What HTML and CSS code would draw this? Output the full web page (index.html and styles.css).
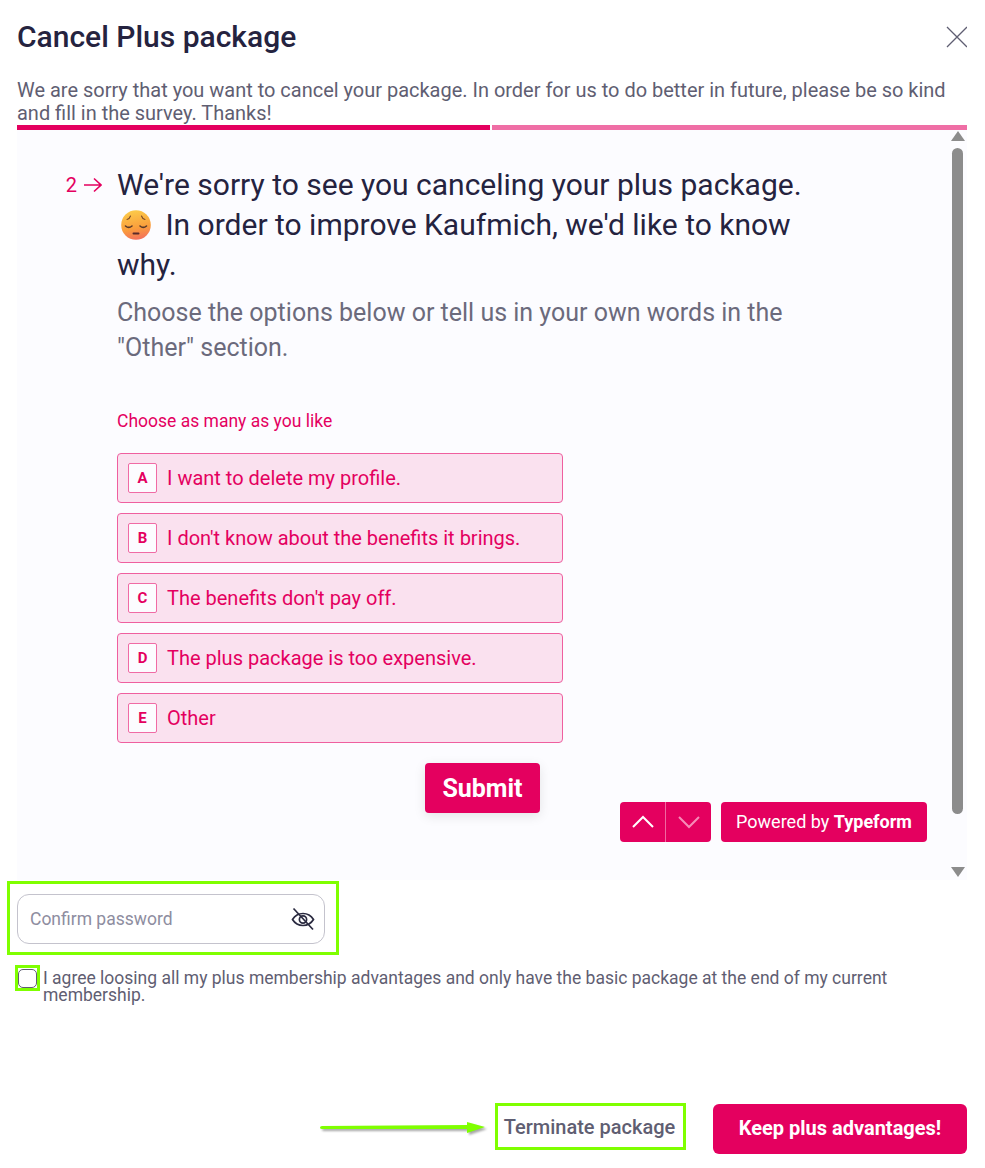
FILE: index.html
```html
<!DOCTYPE html>
<html lang="en">
<head>
    <meta charset="UTF-8">
    <title>Cancel Plus package</title>
    <link rel="stylesheet" href="styles.css">
</head>
<body>
    <div class="dialog">
        <div class="dialog-head">
            <h1 class="dialog-title">Cancel Plus package</h1>
            <svg class="close-icon" viewBox="0 0 22 22" fill="none" stroke="#5f5e72" stroke-width="1.3">
                <path d="M2 1l20 20M22 1L2 21"/>
            </svg>
        </div>
        <p class="dialog-text">We are sorry that you want to cancel your package. In order for us to do better in future, please be so kind and fill in the survey. Thanks!</p>

        <div class="progress">
            <div class="progress-done"></div>
            <div class="progress-rest"></div>
        </div>

        <div class="survey">
            <div class="survey-body">
                <div class="question">
                    <div class="question-num">2
                        <svg class="num-arrow" viewBox="0 0 18 16" fill="none" stroke="#e4005f" stroke-width="1.6">
                            <path d="M0 8h17M10 1.500L17 8l-7 6.500"/>
                        </svg>
                    </div>
                    <div class="question-main">
                        <h2 class="question-title">We're sorry to see you canceling your plus package.
                            <svg class="emoji" viewBox="0 0 30 30">
                                <defs>
                                    <linearGradient id="face" x1="0.4" y1="0" x2="0.6" y2="1">
                                        <stop offset="0" stop-color="#fccb4a"/>
                                        <stop offset="0.6" stop-color="#fa9e3c"/>
                                        <stop offset="1" stop-color="#f36f5e"/>
                                    </linearGradient>
                                </defs>
                                <circle cx="15" cy="15" r="14.800" fill="url(#face)"/>
                                <path d="M4.500 16q3.200 2.800 6.500 0M19 16q3.200 2.800 6.500 0" fill="none" stroke="#5a3a2a" stroke-width="1.600" stroke-linecap="round"/>
                                <path d="M6 9.500q2.500-.5 3.500-3.500M24 9.500q-2.500-.5-3.500-3.500" fill="none" stroke="#7a4a2a" stroke-width="1.100" stroke-linecap="round"/>
                                <path d="M12.500 23.500h5" stroke="#5a2a2a" stroke-width="2" stroke-linecap="round"/>
                            </svg>
                            In order to improve Kaufmich, we'd like to know why.</h2>
                        <p class="question-sub">Choose the options below or tell us in your own words in the "Other" section.</p>
                        <div class="choose-hint">Choose as many as you like</div>
                        <div class="options">
                            <div class="option"><span class="option-key">A</span>I want to delete my profile.</div>
                            <div class="option"><span class="option-key">B</span>I don't know about the benefits it brings.</div>
                            <div class="option"><span class="option-key">C</span>The benefits don't pay off.</div>
                            <div class="option"><span class="option-key">D</span>The plus package is too expensive.</div>
                            <div class="option"><span class="option-key">E</span>Other</div>
                        </div>
                        <div class="submit-row">
                            <button class="submit-btn">Submit</button>
                        </div>
                    </div>
                </div>
                <div class="survey-nav">
                    <div class="nav-arrows">
                        <span class="nav-arrow">
                            <svg viewBox="0 0 24 14" fill="none" stroke="#fff" stroke-width="2"><path d="M2 12L12 2l10 10"/></svg>
                        </span>
                        <span class="nav-arrow nav-arrow-off">
                            <svg viewBox="0 0 24 14" fill="none" stroke="#f68cb8" stroke-width="2"><path d="M2 2l10 10L22 2"/></svg>
                        </span>
                    </div>
                    <div class="powered">Powered by <b>Typeform</b></div>
                </div>
            </div>
            <div class="scrollbar">
                <span class="scroll-up"></span>
                <span class="scroll-thumb"></span>
                <span class="scroll-down"></span>
            </div>
        </div>

        <div class="password-mark">
            <div class="password-field">
                <span class="password-hint">Confirm password</span>
                <svg class="eye-icon" viewBox="0 0 24 24" fill="none" stroke="#2a2a40" stroke-width="1.700">
                    <path d="M1.500 12.500C4 8.500 7.500 6.500 12 6.500s8 2 10.500 6c-2.500 4-6 6-10.500 6s-8-2-10.500-6z"/>
                    <circle cx="12" cy="12.500" r="3.600"/>
                    <path d="M2.500 1.500l19.500 21"/>
                </svg>
            </div>
        </div>

        <div class="agree">
            <span class="check-mark"><span class="check-box"></span></span>
            <span class="agree-text">I agree loosing all my plus membership advantages and only have the basic package at the end of my current membership.</span>
        </div>

        <div class="dialog-foot">
            <svg class="green-arrow" viewBox="0 0 165 14">
                <path d="M0 7.500Q0 6 2 6L147 5V2l18 5-18 6V9L2 9Q0 9 0 7.500z" fill="#7fff00"/>
            </svg>
            <button class="terminate-btn">Terminate package</button>
            <button class="keep-btn">Keep plus advantages!</button>
        </div>
    </div>
</body>
</html>
```

FILE: styles.css
```css
* {
    margin: 0;
    padding: 0;
    box-sizing: border-box;
}

body {
    background: #fff;
    font-family: Roboto, "Liberation Sans", sans-serif;
    color: #5f5e72;
}

.dialog {
    width: 985px;
    height: 1168px;
    padding: 0 18px 0 17px;
    display: flex;
    flex-direction: column;
}

.dialog-head {
    height: 79px;
    display: flex;
    align-items: flex-start;
    justify-content: space-between;
}

.dialog-title {
    margin-top: 20px;
    font-size: 30px;
    line-height: 34px;
    font-weight: 500;
    color: #25233f;
}

.close-icon {
    width: 22px;
    height: 22px;
    margin-top: 26px;
}

.dialog-text {
    font-size: 19.98px;
    line-height: 23px;
    height: 46px;
}

.progress {
    display: flex;
    gap: 2px;
    height: 5px;
}

.progress-done {
    width: 473px;
    background: #e4005f;
}

.progress-rest {
    flex: 1;
    background: #ef6ea5;
}

.survey {
    height: 750px;
    background: #fcfcff;
    display: flex;
}

.survey-body {
    flex: 1;
    position: relative;
}

.question {
    display: flex;
    padding-top: 35px;
}

.question-num {
    width: 100px;
    display: flex;
    justify-content: flex-end;
    align-items: center;
    gap: 7px;
    height: 40px;
    padding-right: 15px;
    font-size: 20px;
    color: #e4005f;
}

.num-arrow {
    width: 18px;
    height: 16px;
}

.question-main {
    width: 700px;
}

.question-title {
    font-size: 30px;
    line-height: 40px;
    font-weight: 400;
    color: #25233f;
}

.emoji {
    width: 30px;
    height: 30px;
    vertical-align: -5px;
    margin: 0 7px 0 4px;
}

.question-sub {
    margin-top: 10px;
    font-size: 25px;
    line-height: 35px;
    color: #6b6a7c;
}

.choose-hint {
    margin-top: 44px;
    font-size: 17.5px;
    line-height: 24px;
    color: #e4005f;
}

.options {
    margin-top: 20px;
    width: 446px;
    display: flex;
    flex-direction: column;
    gap: 10px;
}

.option {
    height: 50px;
    display: flex;
    align-items: center;
    gap: 10px;
    padding-left: 10px;
    background: #fae1ef;
    border: 1px solid #ef5f9f;
    border-radius: 4px;
    font-size: 20px;
    color: #e4005f;
}

.option-key {
    width: 29px;
    height: 30px;
    display: flex;
    align-items: center;
    justify-content: center;
    background: #fcfcff;
    border: 1px solid #f06ba5;
    border-radius: 2px;
    font-size: 15px;
    font-weight: 700;
}

.submit-row {
    margin-top: 20px;
    width: 423px;
    display: flex;
    justify-content: flex-end;
}

.submit-btn {
    width: 115px;
    height: 50px;
    background: #e4005f;
    border: none;
    border-radius: 4px;
    color: #fff;
    font-family: inherit;
    font-size: 25px;
    font-weight: 700;
    box-shadow: 0 3px 12px rgba(0, 0, 0, 0.1);
}

.survey-nav {
    position: absolute;
    top: 672px;
    right: 6px;
    display: flex;
    gap: 10px;
}

.nav-arrows {
    display: flex;
    height: 40px;
    background: #e4005f;
    border-radius: 4px;
}

.nav-arrow {
    width: 45px;
    display: flex;
    align-items: center;
    justify-content: center;
}

.nav-arrow svg {
    width: 24px;
    height: 14px;
}

.nav-arrow-off {
    width: 46px;
    border-left: 1px solid #f068a0;
}

.powered {
    width: 206px;
    height: 40px;
    padding-bottom: 2px;
    display: flex;
    align-items: center;
    justify-content: center;
    white-space: pre;
    background: #e4005f;
    border-radius: 4px;
    color: #fff;
    font-size: 18px;
}

.scrollbar {
    width: 17px;
    margin-left: 17px;
    padding: 1px 3px 3px 1px;
    display: flex;
    flex-direction: column;
    align-items: center;
}

.scroll-up {
    border-left: 7px solid transparent;
    border-right: 7px solid transparent;
    border-bottom: 10px solid #8c8c8c;
}

.scroll-thumb {
    width: 11px;
    height: 666px;
    margin: 7px 0 53px;
    background: #8c8c8c;
    border-radius: 6px;
}

.scroll-down {
    border-left: 7px solid transparent;
    border-right: 7px solid transparent;
    border-top: 10px solid #8c8c8c;
}

.password-mark {
    width: 332px;
    height: 74px;
    margin: 1px 0 0 -10px;
    padding: 10px 11px 8px 7px;
    border: 3px solid #7fff00;
}

.password-field {
    height: 50px;
    padding: 0 9px 0 12px;
    display: flex;
    align-items: center;
    justify-content: space-between;
    border: 1px solid #c4c3cd;
    border-radius: 12px;
    background: #fff;
}

.password-hint {
    font-size: 17.5px;
    color: #8e8da0;
}

.eye-icon {
    width: 24px;
    height: 24px;
}

.agree {
    margin: 10px 0 0 -2px;
    display: flex;
    align-items: flex-start;
    gap: 3px;
}

.check-mark {
    flex: none;
    width: 25px;
    height: 26px;
    border: 3px solid #7fff00;
    display: flex;
    align-items: center;
    justify-content: center;
}

.check-box {
    flex: none;
    width: 19px;
    height: 19px;
    border: 1.5px solid #5f5e72;
    border-radius: 5px;
    background: #fff;
}

.agree-text {
    padding-top: 5px;
    font-size: 17.5px;
    line-height: 17px;
}

.dialog-foot {
    margin-top: auto;
    margin-bottom: 14px;
    display: flex;
    justify-content: flex-end;
    align-items: flex-start;
}

.green-arrow {
    width: 165px;
    height: 14px;
    margin: 16px 10px 0 0;
    filter: drop-shadow(2px 2px 1px rgba(0, 0, 0, 0.35));
}

.terminate-btn {
    width: 191px;
    height: 47px;
    margin: -1px 27px 0 0;
    padding-right: 2px;
    background: #fff;
    border: 3px solid #7fff00;
    color: #5f5e72;
    font-family: inherit;
    font-size: 20px;
    font-weight: 500;
}

.keep-btn {
    width: 254px;
    height: 50px;
    padding-bottom: 2px;
    background: #e4005f;
    border: none;
    border-radius: 6px;
    color: #fff;
    font-family: inherit;
    font-size: 20px;
    font-weight: 700;
}
```
